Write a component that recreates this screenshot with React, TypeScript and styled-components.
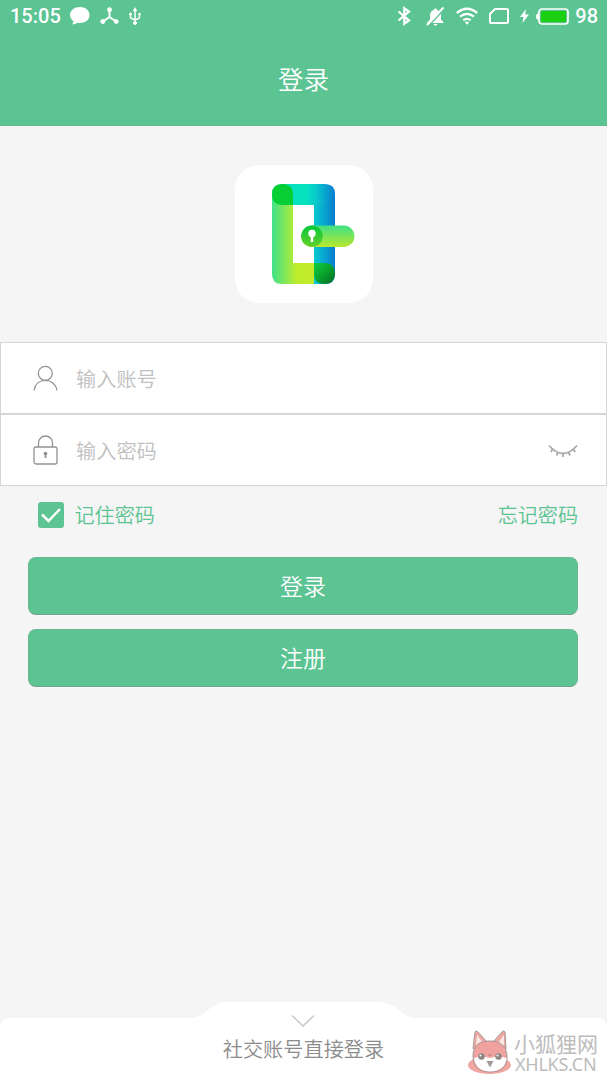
import React, { useState } from 'react';
import styled, { createGlobalStyle } from 'styled-components';

const GREEN = '#5bc492';

const GlobalStyle = createGlobalStyle`
  * { box-sizing: border-box; }
  body {
    margin: 0;
    background: #f5f5f5;
    font-family: 'Noto Sans CJK SC', sans-serif;
    font-weight: 350;
  }
  button, input { font: inherit; }
`;

const Screen = styled.div`
  display: flex;
  flex-direction: column;
  width: 607px;
  height: 1080px;
  overflow: hidden;
  background: #f5f5f5;
`;

const StatusBar = styled.div`
  display: flex;
  justify-content: space-between;
  height: 32px;
  padding: 0 9px 0 10px;
  background: ${GREEN};
  color: #fff;
  font: 500 20px/33px Roboto, sans-serif;
`;

const StatusGroup = styled.div`
  display: flex;
  align-items: center;
  height: 32px;
`;

const StatusIcon = styled.svg<{ $gap: number }>`
  display: block;
  flex: none;
  margin-left: ${(p) => p.$gap}px;
  overflow: visible;
`;

const Level = styled.span`
  margin-left: 6px;
`;

const TitleBar = styled.header`
  display: flex;
  align-items: center;
  justify-content: center;
  height: 94px;
  padding-bottom: 2px;
  background: ${GREEN};
  border-bottom: 1px solid #63b98f;
  color: #fff;
  font-size: 25.5px;
`;

const LogoCard = styled.div`
  display: flex;
  align-self: center;
  width: 138px;
  height: 138px;
  margin: 39px 0;
  border-radius: 24px;
  background: #fff;
`;

const Field = styled.label`
  display: flex;
  align-items: center;
  height: 72px;
  padding: 0 28px 0 31px;
  border: 1px solid #d6d6d6;
  background: #fff;
`;

const Input = styled.input`
  flex: 1;
  min-width: 0;
  height: 40px;
  margin-left: 18px;
  padding: 0;
  border: 0;
  outline: 0;
  background: transparent;
  color: #666;
  font-size: 20.2px;
  line-height: 38px;
  &::placeholder { color: #c0c0c0; opacity: 1; }
`;

const Options = styled.div`
  display: flex;
  align-items: center;
  justify-content: space-between;
  height: 57px;
  padding: 0 29px 0 38px;
  color: ${GREEN};
  font-size: 20.1px;
`;

const Remember = styled.div`
  display: flex;
  align-items: center;
  gap: 10.5px;
  cursor: pointer;
`;

const CheckBox = styled.span`
  display: flex;
  width: 26px;
  height: 26px;
  border-radius: 3px;
  background: ${GREEN};
`;

const Actions = styled.div`
  display: flex;
  flex-direction: column;
  gap: 14px;
  padding: 14px 29px 14px 28px;
`;

const ActionButton = styled.button`
  height: 58px;
  padding: 0 0 3px;
  border: 1px solid #69b892;
  border-bottom-color: #74a48c;
  border-radius: 8px;
  background: ${GREEN};
  color: #fff;
  font-size: 23px;
`;

const Drawer = styled.footer`
  position: relative;
  height: 78px;
  margin-top: auto;
`;

const DrawerShape = styled.svg`
  position: absolute;
  inset: 0;
`;

const DrawerLabel = styled.div`
  position: relative;
  padding-top: 32px;
  color: #8b8b8b;
  font-size: 20.2px;
  line-height: 30px;
  text-align: center;
`;

const Watermark = styled.div`
  position: absolute;
  top: 28px;
  right: 9px;
  display: flex;
  gap: 2px;
  color: #bcbcbc;
`;

const WatermarkText = styled.div`
  display: flex;
  flex-direction: column;
  width: 84px;
  white-space: nowrap;
`;

const WatermarkName = styled.span`
  font-size: 21px;
  line-height: 26px;
  font-weight: 400;
`;

const WatermarkDomain = styled.span`
  padding-left: 1px;
  font: 400 18px/17px 'Noto Sans', sans-serif;
  letter-spacing: -0.25px;
`;

function StatusIcons() {
  return (
    <StatusBar>
      <StatusGroup>
        <span>15:05</span>
        <StatusIcon $gap={9} width="20" height="18" viewBox="0 0 20 18" fill="#fff">
          <path d="M10 0C4.500 0 0 3.500 0 8c0 2.600 1.400 4.700 3.500 6.200-.1 1.200-.6 2.200-1.500 3.100 2.100.1 3.900-.6 5.300-1.600 7 1.400 12.200-2.500 12.200-7.700C19.500 3.500 15.500 0 10 0z" />
        </StatusIcon>
        <StatusIcon $gap={10} width="19" height="18" viewBox="0 0 19 18" fill="#fff" stroke="#fff">
          <path d="M9.500 3v7L3 14.500M9.500 10l6.500 4.500" fill="none" strokeWidth="2" />
          <circle cx="9.500" cy="2.700" r="2" />
          <circle cx="2.800" cy="14.500" r="2" />
          <circle cx="16.200" cy="14.500" r="2" />
        </StatusIcon>
        <StatusIcon $gap={10} width="12" height="19" viewBox="0 0 12 19" fill="#fff" stroke="#fff">
          <path d="M6 3v12M1.500 7v3q0 1 1 1.500L6 13l3.500-1.500q1-.5 1-1.500V7" fill="none" strokeWidth="1.500" />
          <path d="M6 .5L8 4H4z" strokeWidth=".5" />
          <circle cx="6" cy="16" r="1.500" />
          <circle cx="1.500" cy="7" r="1" />
          <path d="M9.500 6h2v2h-2z" strokeWidth=".2" />
        </StatusIcon>
      </StatusGroup>
      <StatusGroup>
        <StatusIcon $gap={0} width="14" height="18" viewBox="0 0 14 18" fill="none" stroke="#fff" strokeWidth="2.300">
          <path d="M1.500 4.500l10.500 9-4.700 3.300V1.200L12 4.500l-10.500 9" />
        </StatusIcon>
        <StatusIcon $gap={15} width="19" height="19" viewBox="0 0 19 19">
          <path d="M9.500 1.500c1 0 1.500.6 1.500 1.400 3 .8 4 3.100 4 5.600v4l2.500 2.700v.8h-16v-.8L4 12.500v-4c0-2.500 1-4.800 4-5.600 0-.8.500-1.400 1.500-1.400zM7.500 17h4q-.5 1.700-2 1.700T7.500 17z" fill="#fff" />
          <path d="M19 1.500L3 18.500" stroke={GREEN} strokeWidth="1.500" />
          <path d="M17.500.5L1 18" stroke="#fff" strokeWidth="2" />
        </StatusIcon>
        <StatusIcon $gap={11} width="22" height="18" viewBox="0 0 22 18" fill="none" stroke="#fff" strokeWidth="2.300">
          <path d="M.8 6q10.200-8.500 20.400 0M4 9.700q7-5.700 14 0M7.300 13.200q3.700-2.700 7.400 0" />
          <path d="M8.800 15.300q2.200-1.500 4.400 0L11 17.800z" fill="#fff" stroke="none" />
        </StatusIcon>
        <StatusIcon $gap={11} width="20" height="16" viewBox="0 0 20 16" fill="none" stroke="#fff" strokeWidth="2">
          <path d="M6 1h12q1 0 1 1v12q0 1-1 1H2q-1 0-1-1V6z" />
        </StatusIcon>
        <StatusIcon $gap={11} width="9" height="14" viewBox="0 0 9 14" fill="#fff">
          <path d="M6 0L0 8h3.500L2.500 14 9 5.500H5.300z" />
        </StatusIcon>
        <StatusIcon $gap={7} width="33" height="17" viewBox="0 0 33 17">
          <path d="M2.500 5Q0 5.500 0 8.500T2.500 12z" fill="#fff" />
          <rect x="3" y="1" width="29" height="15" rx="3" fill="none" stroke="#fff" strokeWidth="1.700" />
          <rect x="5" y="3" width="25" height="11" rx="1" fill="#1bcf13" />
        </StatusIcon>
        <Level>98</Level>
      </StatusGroup>
    </StatusBar>
  );
}

function Logo() {
  return (
    <svg width="138" height="138" viewBox="0 0 138 138">
      <defs>
        <linearGradient id="top">
          <stop offset=".55" stopColor="#06e2be" />
          <stop offset=".7" stopColor="#08c9cc" />
          <stop offset="1" stopColor="#087ccf" />
        </linearGradient>
        <linearGradient id="right">
          <stop offset="0" stopColor="#08cbd0" />
          <stop offset="1" stopColor="#097cce" />
        </linearGradient>
        <linearGradient id="bottom" gradientUnits="userSpaceOnUse" x1="37" y1="0" x2="62" y2="0">
          <stop offset="0" stopColor="#3fe28a" />
          <stop offset="1" stopColor="#c0ec2b" />
        </linearGradient>
        <linearGradient id="corner" x1="0" y1="0" x2="1" y2="1">
          <stop offset="0" stopColor="#10cb40" />
          <stop offset=".5" stopColor="#08a32d" />
          <stop offset="1" stopColor="#056629" />
        </linearGradient>
        <linearGradient id="handle" x1="0" y1="0" x2="0" y2="1">
          <stop offset="0" stopColor="#3de085" />
          <stop offset="1" stopColor="#b9e92d" />
        </linearGradient>
        <linearGradient id="knob" x1="0" y1="0" x2="0" y2="1">
          <stop offset="0" stopColor="#05c83a" />
          <stop offset="1" stopColor="#65cf2b" />
        </linearGradient>
      </defs>
      <path d="M47 19h43q10 0 10 10v11H37V29q0-10 10-10z" fill="url(#top)" />
      <path d="M79 40h21v69q0 10-10 10H79z" fill="url(#right)" />
      <path d="M37 29h21v69h21v21H47q-10 0-10-10z" fill="url(#bottom)" />
      <path d="M47 19q11 0 11 10.500V40H47q-10 0-10-10.500T47 19z" fill="#08ce36" />
      <path d="M79 98h11q10 0 10 10.500T90 119q-11 0-11-11z" fill="url(#corner)" />
      <rect x="66" y="60.500" width="53.500" height="21.500" rx="10.700" fill="url(#handle)" />
      <circle cx="77" cy="71.200" r="10.700" fill="url(#knob)" />
      <circle cx="77" cy="68.500" r="3.700" fill="#fff" />
      <path d="M77 69v7" stroke="#fff" strokeWidth="2.500" strokeLinecap="round" />
    </svg>
  );
}

const UserIcon = () => (
  <svg width="26" height="30" viewBox="0 0 26 30" fill="none" stroke="#929292" strokeWidth="1.300">
    <circle cx="13.300" cy="10.300" r="7" />
    <path d="M2 27.300C3 21 7.500 17.300 13.300 17.300S24 21 25 27.300" />
  </svg>
);

const LockIcon = () => (
  <svg width="26" height="30" viewBox="0 0 26 30" fill="none" stroke="#929292" strokeWidth="1.300">
    <rect x="2" y="12" width="23" height="17" rx="2" />
    <path d="M6.500 12V8a7 7 0 0 1 14 0v4" />
    <circle cx="13.500" cy="18.500" r="1.200" fill="#858585" />
    <path d="M13.500 18.500v4.500" strokeWidth="1.800" />
  </svg>
);

const ClosedEyeIcon = () => (
  <svg width="30" height="14" viewBox="0 0 30 14" fill="none" stroke="#aaa" strokeWidth="1.800">
    <path d="M1 2.500Q15 18.500 29 2.500" />
    <path d="M4.500 6l-1.500 3M10 9.500l-1.500 3M15 10.500v3.500M20.500 9.500l1.500 3M25.500 6l1.500 3" />
  </svg>
);

const Fox = () => (
  <svg width="44" height="45" viewBox="0 0 44 45">
    <ellipse cx="21.500" cy="35" rx="21.500" ry="9" fill="#f0a6a1" />
    <path d="M5 19L7 2q1-2 3 0l9 10M25 12l9-10q2-2 3 0l1 17" fill="#f2a9a4" stroke="#a39797" />
    <path d="M8 15L9 5l6 8M30 13l6-8 0 11" fill="#f8e7e2" />
    <path d="M5 26C5 15 12 11 22 11s17 5 17 16-7 15-17 15S5 37 5 26z" fill="#f0a39e" stroke="#a89696" />
    <path d="M6 28q8-3 16 0 8-3 16.500 0C38 37 31 41.500 22 41.500S7 37 6 28z" fill="#fff" />
    <circle cx="13.500" cy="26.500" r="3.200" fill="#8f8484" />
    <circle cx="30.500" cy="26.500" r="3.200" fill="#8f8484" />
    <circle cx="12.500" cy="25.500" r="1" fill="#fff" />
    <circle cx="29.500" cy="25.500" r="1" fill="#fff" />
    <path d="M18.500 31h7L22 37.500z" fill="#a29898" />
    <path d="M20 25h4" stroke="#b88" />
  </svg>
);

export default function App() {
  const [remember, setRemember] = useState(true);
  return (
    <Screen>
      <GlobalStyle />
      <StatusIcons />
      <TitleBar>登录</TitleBar>
      <LogoCard><Logo /></LogoCard>
      <Field>
        <UserIcon />
        <Input placeholder="输入账号" />
      </Field>
      <Field>
        <LockIcon />
        <Input type="password" placeholder="输入密码" />
        <ClosedEyeIcon />
      </Field>
      <Options>
        <Remember onClick={() => setRemember(!remember)}>
          <CheckBox>
            {remember && (
              <svg width="26" height="26" viewBox="0 0 26 26" fill="none" stroke="#fff" strokeWidth="2.500">
                <path d="M4 12.500l6.500 6.500L22 7" />
              </svg>
            )}
          </CheckBox>
          记住密码
        </Remember>
        <span>忘记密码</span>
      </Options>
      <Actions>
        <ActionButton>登录</ActionButton>
        <ActionButton>注册</ActionButton>
      </Actions>
      <Drawer>
        <DrawerShape width="607" height="78" viewBox="0 0 607 78">
          <path d="M0 78V26Q0 16 10 16H190C207 16 209 0 228 0H379C398 0 400 16 417 16H597Q607 16 607 26V78z" fill="#fff" />
          <path d="M292 13.500l11 10.500 11-10.500" fill="none" stroke="#ccc" strokeWidth="1.700" />
        </DrawerShape>
        <DrawerLabel>社交账号直接登录</DrawerLabel>
        <Watermark>
          <Fox />
          <WatermarkText>
            <WatermarkName>小狐狸网</WatermarkName>
            <WatermarkDomain>XHLKS.CN</WatermarkDomain>
          </WatermarkText>
        </Watermark>
      </Drawer>
    </Screen>
  );
}
